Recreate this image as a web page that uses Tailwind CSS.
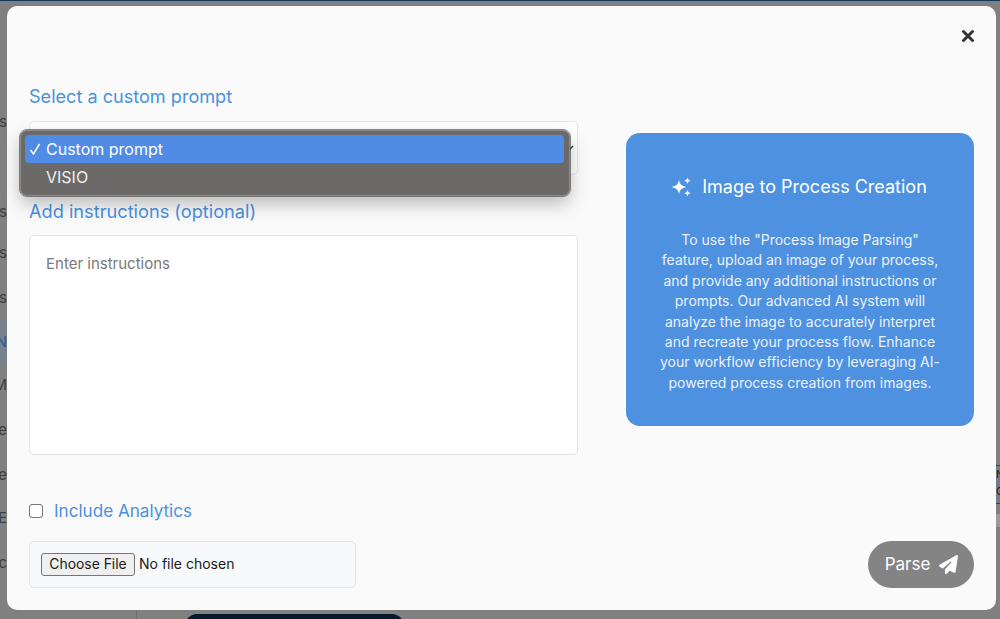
<!DOCTYPE html>
<html>
<head>
<meta charset="utf-8">
<script src="https://cdn.jsdelivr.net/npm/@tailwindcss/browser@4"></script>
</head>
<body class="font-['Inter','Noto_Sans',sans-serif]">
<div class="relative w-[1000px] h-[619px] overflow-hidden bg-[#808080]">
  <!-- page behind the overlay -->
  <div class="h-px bg-[#0f3a5c]"></div>
  <div class="absolute left-0 top-[100px] w-[7px] flex flex-col items-end overflow-hidden text-[#3d3d3d] text-[15px] leading-[44px]">
    <div class="h-[44px]">s</div>
    <div class="h-[46px]"></div>
    <div class="h-[41px]">s</div>
    <div class="h-[45px]">s</div>
    <div class="h-[44px]">s</div>
    <div class="h-[43px] w-[7px] flex justify-end bg-[#78828c] text-[#1f5f99]">N</div>
    <div class="h-[45px]">M</div>
    <div class="h-[45px]">e</div>
    <div class="h-[43px]">e</div>
    <div class="h-[45px]">E</div>
    <div class="h-[44px]">c</div>
  </div>
  <div class="absolute right-0 top-[465px] w-[4px] h-[39px] bg-[#747b8a] border-y border-[#3a3f78] overflow-hidden flex flex-col text-[11px] leading-[17px] text-[#222]">
    <span>N</span><span>C</span>
  </div>
  <div class="absolute right-0 top-[514px] w-[4px] h-[13px] bg-[#9a9a9a]"></div>
  <div class="absolute left-[136px] top-[610px] w-px h-[9px] bg-[#6f6f6f]"></div>
  <div class="absolute left-[185px] top-[614px] w-[219px] h-[12px] rounded-t-xl bg-[#06192b]"></div>

  <!-- modal -->
  <div class="absolute left-[7px] top-[6px] w-[989px] h-[604px] rounded-[10px] bg-[#fafafa] pl-[22px] pr-[22px] flex flex-col">
    <div class="h-[75px] pt-[21px] flex justify-end">
      <svg class="mt-[2px] mr-[-1px]" width="14" height="14" viewBox="0 0 14 14"><path d="M2.5 2.5L11.5 11.5M11.5 2.5L2.5 11.5" stroke="#333" stroke-width="3" stroke-linecap="round" fill="none"/></svg>
    </div>
    <div class="flex gap-[48px]">
      <div class="w-[549px]">
        <div class="text-[18.1px] leading-[30px] text-[#4b91e0]">Select a custom prompt</div>
        <div class="mt-[10px] h-[54px] rounded-[5px] border border-[#e6e6e6] bg-white flex items-center justify-end pr-[3px]">
          <svg width="6" height="6" viewBox="0 0 6 6"><path d="M1 5L5 1" stroke="#333" stroke-width="1.3" fill="none"/></svg>
        </div>
        <div class="mt-[21px] text-[18.2px] leading-[30px] text-[#4b91e0]">Add instructions (optional)</div>
        <div class="mt-[9px] h-[220px] rounded-[5px] border border-[#e3e3e3] bg-white pl-[16px] pt-[18px] text-[15px] leading-[20px] text-[#7a7a7a]">Enter instructions</div>
        <div class="mt-[44px] flex items-center gap-[11px] h-[24px]">
          <input type="checkbox" class="w-[14px] h-[14px] appearance-none rounded-[3px] border border-[#767676] bg-white">
          <span class="text-[17.1px] text-[#4b91e0]">Include Analytics</span>
        </div>
        <div class="mt-[18px] w-[327px] h-[47px] rounded-[5px] border border-[#e3e3e3] bg-[#f8f9fb] flex items-center pl-[11px] text-[14px] text-[#1a1a1a]">
          <span class="h-[23px] w-[94px] rounded-[3px] border border-[#767676] bg-[#efefef] flex items-center justify-center pb-px text-[13.9px]">Choose File</span>
          <span class="ml-[4px] pb-[2px]">No file chosen</span>
        </div>
      </div>
      <div class="flex-1 flex flex-col justify-between">
        <div class="mt-[52px] h-[293px] rounded-[14px] bg-[#4e91e0] text-white px-[30px] pt-[42px] text-center">
          <div class="-ml-[2px] flex items-center justify-center gap-[10px] text-[18px] leading-[24px] font-normal">
            <svg width="21" height="20" viewBox="0 0 21 20" fill="white">
              <path d="M8 3C9 7.5 10.5 8.8 15.5 10C10.5 11.2 9 12.5 8 17C7 12.5 5.5 11.2 0.5 10C5.5 8.8 7 7.5 8 3Z"/>
              <path d="M16.5 0.5C17 2.5 17.5 3 19.8 3.7C17.5 4.4 17 4.9 16.5 6.9C16 4.9 15.5 4.4 13.2 3.7C15.5 3 16 2.5 16.5 0.5Z"/>
              <path d="M16.5 13C17 15 17.5 15.5 19.8 16.2C17.5 16.9 17 17.4 16.5 19.4C16 17.4 15.5 16.9 13.2 16.2C15.5 15.5 16 15 16.5 13Z"/>
            </svg>
            <span>Image to Process Creation</span>
          </div>
          <p class="mt-[31px] text-[14px] leading-[20.4px] text-[#eaf2fc]">To use the "Process Image Parsing" feature, upload an image of your process, and provide any additional instructions or prompts. Our advanced AI system will analyze the image to accurately interpret and recreate your process flow. Enhance your workflow efficiency by leveraging AI-powered process creation from images.</p>
        </div>
        <button class="self-end w-[106px] h-[47px] rounded-full bg-[#848484] text-white flex items-center justify-center gap-[9px] pl-[1px] text-[17px]">
          <span>Parse</span>
          <svg width="19" height="19" viewBox="0 0 512 512" fill="white"><path d="M498.1 5.6c10.1 7 15.4 19.1 13.5 31.2l-64 416c-1.5 9.7-7.4 18.2-16 23s-18.9 5.4-28 1.6L284 427.7l-68.5 74.1c-8.9 9.7-22.9 12.9-35.2 8.1S160 493.2 160 480V396.4c0-4 1.5-7.8 4.2-10.7L331.8 202.8c5.8-6.3 5.6-16-.4-22s-15.7-6.4-22-.7L106 360.8 17.7 316.6C7.1 311.3 .3 300.7 0 288.9s5.9-22.8 16.1-28.7l448-256c10.7-6.1 23.9-5.5 34 1.4z"/></svg>
        </button>
      </div>
    </div>
  </div>

  <!-- open select menu -->
  <div class="absolute left-[20px] top-[130px] w-[550px] h-[66px] rounded-[7px] bg-[#6b6a68] border border-[#8a8a8a] outline outline-[#3a3a3a]/60 shadow-[0_8px_18px_rgba(0,0,0,0.25)] py-[4px] pl-[4px] pr-[5px] text-[16px] text-[#efefef]">
    <div class="h-[28px] rounded-[4px] bg-[#508ce6] text-white flex items-center pl-[4px]">
      <svg class="mr-[5px]" width="12" height="14" viewBox="0 0 12 14"><path d="M1.5 8L4.5 12L10.5 2" stroke="white" stroke-width="1.5" fill="none"/></svg>
      <span>Custom prompt</span>
    </div>
    <div class="h-[27px] flex items-center pl-[21px]">VISIO</div>
  </div>
</div>
</body>
</html>
